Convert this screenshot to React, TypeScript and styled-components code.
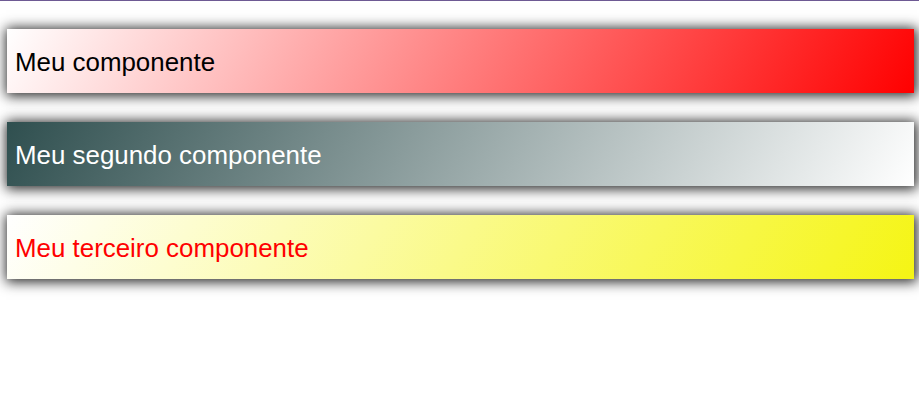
import React from 'react';
import styled, { createGlobalStyle } from 'styled-components';

const GlobalStyle = createGlobalStyle`
  html, body {
    margin: 0;
    padding: 0;
    background: #ffffff;
    font-family: "Liberation Sans", Arial, sans-serif;
  }
`;

const Page = styled.div`
  min-height: 417px;
  border-top: 1px solid #6e5a94;
  padding: 28px 5px 40px 7px;
  box-sizing: border-box;
  display: flex;
  flex-direction: column;
  gap: 29px;
`;

interface BoxProps {
  $from: string;
  $to: string;
  $color: string;
}

const Box = styled.div<BoxProps>`
  height: 64px;
  width: 907px;
  box-sizing: border-box;
  padding: 2px 0 0 8px;
  display: flex;
  align-items: center;
  font-size: 25.9px;
  color: ${(p) => p.$color};
  background: linear-gradient(120deg, ${(p) => p.$from}, ${(p) => p.$to});
  box-shadow: 1px 1px 12px 2px rgba(0, 0, 0, 0.85);
`;

const items = [
  { text: 'Meu componente', from: '#ffffff', to: '#ff0000', color: '#000000' },
  { text: 'Meu segundo componente', from: '#2f4f4f', to: '#ffffff', color: '#ffffff' },
  { text: 'Meu terceiro componente', from: '#ffffff', to: '#f5f514', color: '#ff0000' },
];

export default function App() {
  return (
    <>
      <GlobalStyle />
      <Page>
        {items.map((item) => (
          <Box key={item.text} $from={item.from} $to={item.to} $color={item.color}>
            {item.text}
          </Box>
        ))}
      </Page>
    </>
  );
}
